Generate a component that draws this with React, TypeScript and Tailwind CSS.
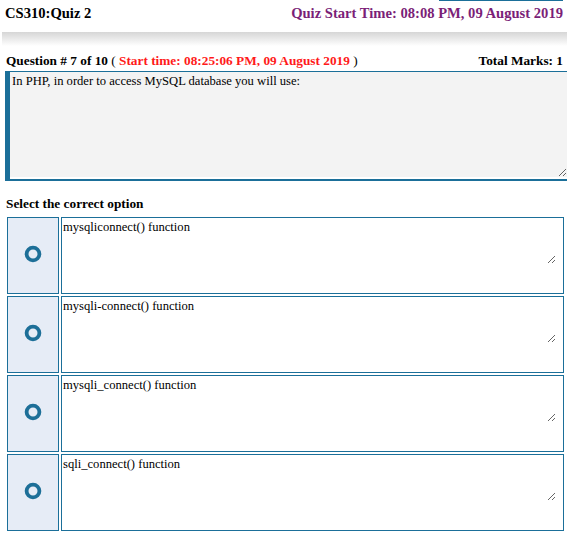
import { useState } from "react";

const options = [
  "mysqliconnect() function",
  "mysqli-connect() function",
  "mysqli_connect() function",
  "sqli_connect() function",
];

function Ring({ on }: { on: boolean }) {
  return (
    <svg width="18" height="18" viewBox="0 0 18 18">
      <circle cx="9" cy="9" r="6.4" fill="none" stroke="#1d6f98" strokeWidth="3.8" />
      {on && <circle cx="9" cy="9" r="2.4" fill="#1d6f98" />}
    </svg>
  );
}

export default function App() {
  const [picked, setPicked] = useState<number | null>(null);

  return (
    <div className="w-[567px] h-[536px] overflow-hidden bg-white text-black font-['Liberation_Serif',serif]">
      <div className="flex justify-end pr-[4px]">
        <div className="w-[124px] h-px bg-[#1b6f99]" />
      </div>

      <div className="flex items-start justify-between px-[5px] pr-[4px] pt-[4px] h-[31px] text-[14.6px] leading-[17px] font-bold">
        <span>CS310:Quiz 2</span>
        <span className="text-[#7b1f78]">Quiz Start Time: 08:08 PM, 09 August 2019</span>
      </div>

      <div className="ml-[2px] h-[14px] bg-gradient-to-b from-[#d6d6d6] to-white" />

      <div className="flex items-start justify-between px-[6px] pr-[4px] pt-[7px] h-[25px] text-[13.3px] leading-[16px]">
        <span>
          <b>Question # 7 of 10</b> ( <b className="text-[#ff1a1a]">Start time: 08:25:06 PM, 09 August 2019</b> )
        </span>
        <b>Total Marks: 1</b>
      </div>

      <div className="ml-[5px] border-l-[5px] border-t border-b-2 border-[#1b6f99] pb-[2px]">
        <textarea
          readOnly
          className="block w-full h-[105px] bg-[#f3f3f3] px-[2px] pt-[2px] text-[12.6px] leading-[15px] outline-none"
          defaultValue="In PHP, in order to access MySQL database you will use:"
        />
      </div>

      <div className="px-[6px] pt-[15px] pb-[5px] text-[13.3px] font-bold leading-[16px]">Select the correct option</div>

      <div className="flex flex-col gap-[2px] pl-[7px] pr-[3px]">
        {options.map((o, i) => (
          <div key={i} className="flex gap-[2px] h-[77px]">
            <button
              onClick={() => setPicked(i)}
              className="w-[52px] flex items-center justify-center pb-[3px] border border-[#1b6f99] bg-[#e6ecf6]"
            >
              <Ring on={picked === i} />
            </button>
            <div className="flex-1 border border-[#1b6f99] bg-white">
              <textarea
                readOnly
                className="block w-[494px] h-[46px] px-[1px] pt-[2px] text-[12.6px] leading-[15px] outline-none"
                defaultValue={o}
              />
            </div>
          </div>
        ))}
      </div>
    </div>
  );
}
